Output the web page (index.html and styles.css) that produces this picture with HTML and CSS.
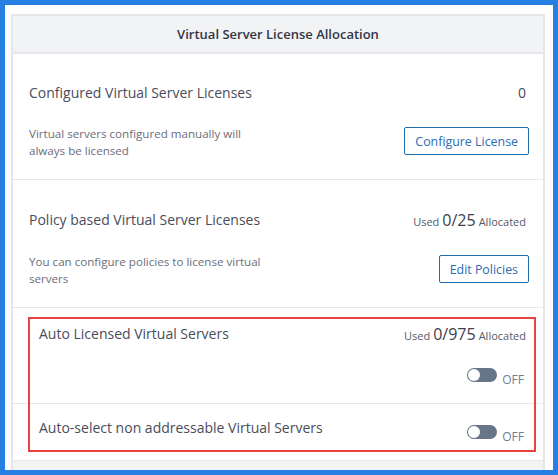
FILE: index.html
```html
<!DOCTYPE html>
<html lang="en">
<head>
<meta charset="utf-8">
<title>Virtual Server License Allocation</title>
<link rel="stylesheet" href="styles.css">
</head>
<body>
<div class="frame">
  <div class="card">
    <div class="card-header">Virtual Server License Allocation</div>

    <div class="section">
      <div class="row-top">
        <span class="title">Configured Virtual Server Licenses</span>
        <span class="count">0</span>
      </div>
      <div class="row-bottom">
        <p class="desc">Virtual servers configured manually will always be licensed</p>
        <button class="btn" type="button">Configure License</button>
      </div>
    </div>

    <div class="section section-usage">
      <div class="row-top">
        <span class="title">Policy based Virtual Server Licenses</span>
        <span class="usage"><span class="usage-label">Used</span><span class="usage-num">0/25</span><span class="usage-label">Allocated</span></span>
      </div>
      <div class="row-bottom">
        <p class="desc">You can configure policies to license virtual servers</p>
        <button class="btn" type="button">Edit Policies</button>
      </div>
    </div>

    <div class="section section-auto">
      <div class="row-top">
        <span class="title">Auto Licensed Virtual Servers</span>
        <span class="usage"><span class="usage-label">Used</span><span class="usage-num">0/975</span><span class="usage-label">Allocated</span></span>
      </div>
      <div class="row-toggle">
        <div class="switch-group">
          <span class="switch"><span class="knob"></span></span>
          <span class="switch-label">OFF</span>
        </div>
      </div>
    </div>

    <div class="section section-inline">
      <span class="title">Auto-select non addressable Virtual Servers</span>
      <div class="switch-group">
        <span class="switch"><span class="knob"></span></span>
        <span class="switch-label">OFF</span>
      </div>
    </div>

    <div class="card-footer"></div>

    <div class="highlight"></div>
  </div>
</div>
</body>
</html>
```

FILE: styles.css
```css
html, body {
  margin: 0;
  padding: 0;
}

body {
  font-family: "Open Sans", "Noto Sans", sans-serif;
  color: #454857;
}

.frame {
  box-sizing: border-box;
  width: 558px;
  height: 475px;
  border: 5px solid #2680e4;
  background: #ffffff;
  padding: 9px 8px 0 6px;
  overflow: hidden;
}

.card {
  position: relative;
  border: 2px solid #e4e6ea;
  border-bottom: none;
  background: #ffffff;
}

.card-header {
  height: 36px;
  line-height: 36px;
  background: #f2f3f5;
  border-bottom: 2px solid #e4e6ea;
  text-align: center;
  font-size: 13px;
  font-weight: 600;
  color: #323645;
}

.section {
  display: flex;
  flex-direction: column;
  gap: 22px;
  padding: 29px 14px 20px 16px;
  border-bottom: 1px solid #e6e8eb;
}

.row-top {
  display: flex;
  justify-content: space-between;
  align-items: center;
  height: 20px;
}

.section-usage .row-top,
.section-auto .row-top {
  height: 22px;
}

.title {
  font-size: 14px;
  line-height: 20px;
  color: #4a4c5a;
}

.count {
  font-size: 14px;
  line-height: 20px;
  margin-right: 3px;
  color: #4a4c5a;
}

.usage {
  display: inline-flex;
  align-items: baseline;
  gap: 3px;
  height: 22px;
  line-height: 22px;
  margin-right: 3px;
  white-space: nowrap;
}

.usage-label {
  font-size: 11px;
  color: #555a66;
}

.usage-num {
  font-size: 16px;
  color: #3d404c;
}

.row-bottom {
  display: flex;
  justify-content: space-between;
  align-items: flex-start;
}

.desc {
  margin: 0;
  max-width: 240px;
  font-size: 11.6px;
  line-height: 17px;
  color: #6b6d7a;
}

.btn {
  height: 28px;
  margin-top: 2px;
  padding: 0 10px;
  border: 1px solid #1f6db0;
  border-radius: 2px;
  background: #ffffff;
  font-family: inherit;
  font-size: 12.4px;
  color: #2b6cb3;
}

.section-auto {
  gap: 23px;
  padding: 15px 14px 15px 26px;
}

.row-toggle {
  display: flex;
  justify-content: flex-end;
}

.switch-group {
  display: flex;
  align-items: flex-end;
  gap: 5px;
  margin-right: 5px;
}

.switch {
  position: relative;
  width: 30px;
  height: 14px;
  margin-bottom: 6px;
  border-radius: 7px;
  background: #66758a;
}

.knob {
  position: absolute;
  left: 1px;
  top: 1px;
  width: 12px;
  height: 12px;
  border-radius: 50%;
  background: #ffffff;
}

.switch-label {
  font-size: 12px;
  line-height: 16px;
  color: #6c7e96;
}

.section-inline {
  flex-direction: row;
  justify-content: space-between;
  align-items: flex-start;
  padding: 14px 14px 15px 26px;
}

.section-inline .switch-group {
  margin-top: 7px;
}

.card-footer {
  height: 30px;
  background: #f2f3f5;
}

.highlight {
  position: absolute;
  left: 15px;
  top: 301px;
  box-sizing: border-box;
  width: 508px;
  height: 135px;
  border: 2px solid #e8413f;
  pointer-events: none;
}
```
